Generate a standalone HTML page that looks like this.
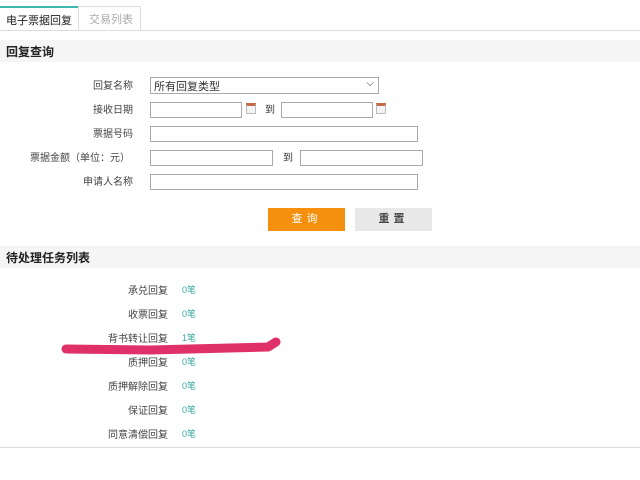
<!DOCTYPE html>
<html><head><meta charset="utf-8"><style>
*{margin:0;padding:0;box-sizing:border-box}
body{width:640px;height:480px;background:#fff;position:relative;overflow:hidden;font-family:"Liberation Sans","Noto Sans CJK SC",sans-serif;font-size:11px;color:#333}
.a{position:absolute}
.in{position:absolute;border:1px solid #aaa;background:#fff;height:16px}
.lb{position:absolute;text-align:right;width:200px;font-size:10px;color:#444}
.cal{position:absolute;width:10px;height:11px;border:1px solid #bbb;border-top:3px solid #c86a4a;background:#f3f3f3}
.cnt{position:absolute;color:#3aa9a0;font-size:9px}
</style></head><body>
<div class="a" style="left:0;top:6px;width:78px;height:25px;border-top:2px solid #3fb8b0;background:#fff;font-size:11px;padding:4px 0 0 6px;color:#222">电子票据回复</div>
<div class="a" style="left:78px;top:6px;width:63px;height:25px;border:1px solid #ddd;border-bottom:none;color:#aaa;padding:4px 0 0 10px">交易列表</div>
<div class="a" style="left:0;top:30px;width:640px;height:1px;background:#ddd"></div>
<div class="a" style="left:0;top:40px;width:640px;height:22px;background:#f5f5f5;font-weight:bold;font-size:12px;padding:3px 0 0 6px;color:#222">回复查询</div>

<div class="lb" style="left:-67px;top:77px">回复名称</div>
<div class="in" style="left:150px;top:77px;width:229px;height:17px;padding:0 3px;font-size:11px">所有回复类型<span style="position:absolute;right:4px;top:0;font-size:10px">⌵</span></div>
<div class="lb" style="left:-67px;top:101px">接收日期</div>
<div class="in" style="left:150px;top:102px;width:92px"></div>
<div class="cal" style="left:246px;top:103px"></div>
<div class="a" style="left:265px;top:101px;font-size:10px">到</div>
<div class="in" style="left:281px;top:102px;width:92px"></div>
<div class="cal" style="left:376px;top:103px"></div>
<div class="lb" style="left:-67px;top:125px">票据号码</div>
<div class="in" style="left:150px;top:126px;width:268px"></div>
<div class="lb" style="left:-70px;top:149px">票据金额（单位：元）</div>
<div class="in" style="left:150px;top:150px;width:123px"></div>
<div class="a" style="left:283px;top:149px;font-size:10px">到</div>
<div class="in" style="left:300px;top:150px;width:123px"></div>
<div class="lb" style="left:-67px;top:173px">申请人名称</div>
<div class="in" style="left:150px;top:174px;width:268px"></div>

<div class="a" style="left:268px;top:208px;width:77px;height:23px;background:#f5900f;color:#fff;text-align:center;line-height:23px;letter-spacing:4px">查询</div>
<div class="a" style="left:355px;top:208px;width:77px;height:23px;background:#e8e8e8;color:#444;text-align:center;line-height:23px;letter-spacing:4px;font-weight:bold">重置</div>

<div class="a" style="left:0;top:246px;width:640px;height:22px;background:#f5f5f5;font-weight:bold;font-size:12px;padding:3px 0 0 6px;color:#222">待处理任务列表</div>

<div class="lb" style="left:-32px;top:282px">承兑回复</div><div class="cnt" style="left:182px;top:283px">0笔</div>
<div class="lb" style="left:-32px;top:306px">收票回复</div><div class="cnt" style="left:182px;top:307px">0笔</div>
<div class="lb" style="left:-32px;top:330px">背书转让回复</div><div class="cnt" style="left:182px;top:331px">1笔</div>
<div class="lb" style="left:-32px;top:354px">质押回复</div><div class="cnt" style="left:182px;top:355px">0笔</div>
<div class="lb" style="left:-32px;top:378px">质押解除回复</div><div class="cnt" style="left:182px;top:379px">0笔</div>
<div class="lb" style="left:-32px;top:402px">保证回复</div><div class="cnt" style="left:182px;top:403px">0笔</div>
<div class="lb" style="left:-32px;top:426px">同意清偿回复</div><div class="cnt" style="left:182px;top:427px">0笔</div>

<svg class="a" style="left:0;top:0" width="640" height="480"><path d="M66 349 L150 350 L268 347 L276 342" stroke="#e0306a" stroke-width="9" fill="none" stroke-linecap="round" stroke-linejoin="round"/></svg>
<div class="a" style="left:0;top:447px;width:640px;height:1px;background:#ddd"></div>
</body></html>
